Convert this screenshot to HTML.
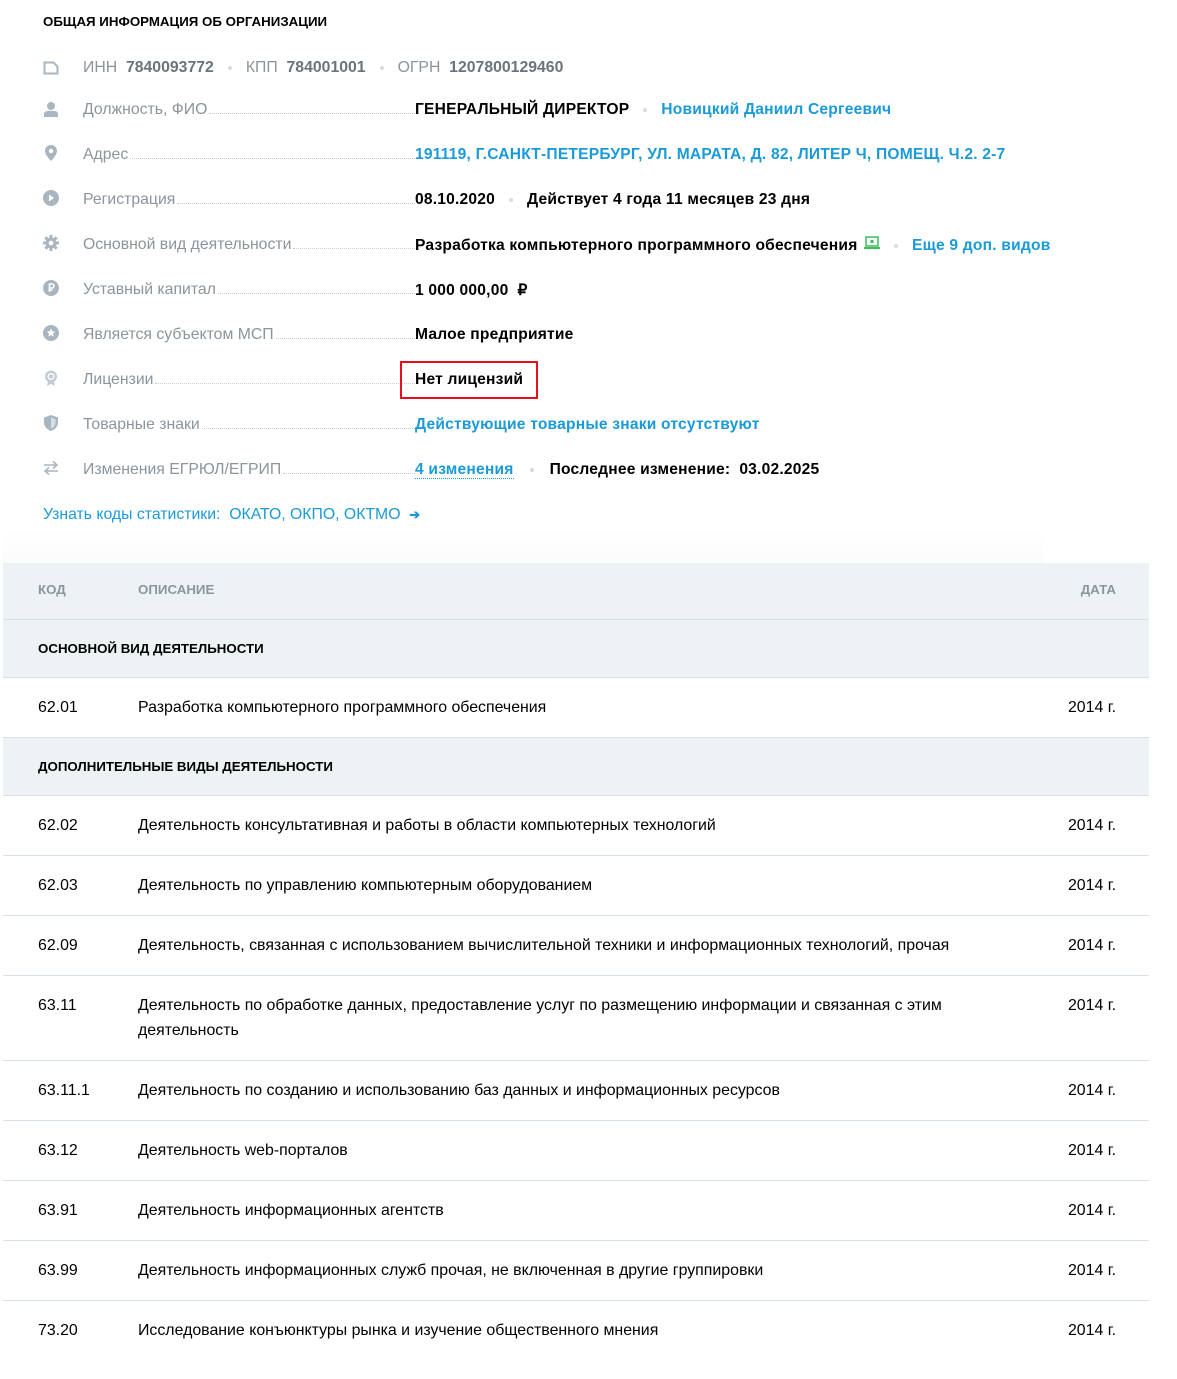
<!DOCTYPE html>
<html><head><meta charset="utf-8"><style>
*{margin:0;padding:0;box-sizing:border-box}
body{width:1177px;height:1379px;background:#fff;font-family:"Liberation Sans",sans-serif;color:#000;position:relative;overflow:hidden}
.a{position:absolute;white-space:nowrap}
.t{left:43px;top:14px;font-size:13.3px;font-weight:bold}
.lab{left:83px;font-size:15.8px;color:#8b959d;width:332px;display:flex;align-items:baseline}
.lab:after{content:"";flex:1;border-bottom:1px dotted #c5cbd0;margin-left:2px}
.v{left:415px;font-size:15.6px;font-weight:bold;letter-spacing:0.2px}
.b{color:#1a9bd7}
.dot{display:inline-block;width:4px;height:4px;border-radius:2px;background:#d5dde3;vertical-align:middle;margin:0 14px}
.ic{position:absolute;left:43px;width:16px;height:16px}
.tb{position:absolute;left:3px;width:1146px}
.r{position:relative;border-bottom:1px solid #d8e1e7;font-size:15.9px;height:60px}
.r span{position:absolute;top:21px}
.c1{left:35px}.c2{left:135px}.c3{right:33px}
.hd{background:#edf2f5}
</style></head><body>
<div class="a t">ОБЩАЯ ИНФОРМАЦИЯ ОБ ОРГАНИЗАЦИИ</div>

<svg class="ic" style="top:60px" viewBox="0 0 16 16"><path d="M1.5 2.5h9l4 4v7h-13z" fill="none" stroke="#a9b6c0" stroke-width="2"/></svg>
<div class="a" style="left:83px;top:59px;font-size:15.8px;color:#8b959d">ИНН&nbsp; <b style="color:#6a747c">7840093772</b><span class="dot"></span>КПП&nbsp; <b style="color:#6a747c">784001001</b><span class="dot"></span>ОГРН&nbsp; <b style="color:#6a747c">1207800129460</b></div>

<svg class="ic" style="top:101px" viewBox="0 0 16 16"><circle cx="8" cy="5" r="4" fill="#a9b6c0"/><path d="M1 16v-3q0-3 4-3h6q4 0 4 3v3z" fill="#a9b6c0"/></svg>
<div class="a lab" style="top:101px">Должность, ФИО</div>
<div class="a v" style="top:101px">ГЕНЕРАЛЬНЫЙ ДИРЕКТОР<span class="dot"></span><span class="b">Новицкий Даниил Сергеевич</span></div>

<svg class="ic" style="top:145px" viewBox="0 0 16 16"><path d="M8 0a6 6 0 0 1 6 6c0 4-6 10-6 10S2 10 2 6a6 6 0 0 1 6-6z" fill="#a9b6c0"/><circle cx="8" cy="6" r="2.2" fill="#fff"/></svg>
<div class="a lab" style="top:146px">Адрес</div>
<div class="a v b" style="top:146px">191119, Г.САНКТ-ПЕТЕРБУРГ, УЛ. МАРАТА, Д. 82, ЛИТЕР Ч, ПОМЕЩ. Ч.2. 2-7</div>

<svg class="ic" style="top:190px" viewBox="0 0 16 16"><circle cx="8" cy="8" r="8" fill="#a9b6c0"/><path d="M6 4.5l5 3.5-5 3.5z" fill="#fff"/></svg>
<div class="a lab" style="top:191px">Регистрация</div>
<div class="a v" style="top:191px">08.10.2020<span class="dot"></span>Действует 4 года 11 месяцев 23 дня</div>

<svg class="ic" style="top:235px" viewBox="0 0 16 16"><circle cx="8" cy="8" r="5.5" fill="#a9b6c0"/><g stroke="#a9b6c0" stroke-width="3"><path d="M8 0v16M0 8h16M2.3 2.3l11.4 11.4M13.7 2.3L2.3 13.7"/></g><circle cx="8" cy="8" r="2.3" fill="#fff"/></svg>
<div class="a lab" style="top:236px">Основной вид деятельности</div>
<div class="a v" style="top:236px">Разработка компьютерного программного обеспечения <svg width="16" height="14" viewBox="0 0 16 14" style="vertical-align:0px;margin-left:2px"><rect x="2" y="1" width="12" height="9" fill="none" stroke="#3cbf5c" stroke-width="1.5"/><rect x="0" y="11" width="16" height="2" fill="#3cbf5c"/><rect x="6.5" y="4" width="3" height="3" fill="#3cbf5c"/></svg><span class="dot"></span><span class="b">Еще 9 доп. видов</span></div>

<svg class="ic" style="top:280px" viewBox="0 0 16 16"><circle cx="8" cy="8" r="8" fill="#a9b6c0"/><path d="M6.5 12V4h2.5a2 2 0 0 1 0 4H5.5M5.5 10h4" fill="none" stroke="#fff" stroke-width="1.6"/></svg>
<div class="a lab" style="top:281px">Уставный капитал</div>
<div class="a v" style="top:281px">1 000 000,00&nbsp; ₽</div>

<svg class="ic" style="top:325px" viewBox="0 0 16 16"><circle cx="8" cy="8" r="8" fill="#a9b6c0"/><path d="M8 3.5l1.3 2.8 3 .3-2.3 2 .7 3L8 10l-2.7 1.6.7-3-2.3-2 3-.3z" fill="#fff"/></svg>
<div class="a lab" style="top:326px">Является субъектом МСП</div>
<div class="a v" style="top:326px">Малое предприятие</div>

<svg class="ic" style="top:370px" viewBox="0 0 16 16"><circle cx="8" cy="6.5" r="6" fill="#c4cdd4"/><circle cx="8" cy="6.5" r="3.5" fill="#fff"/><circle cx="8" cy="6.5" r="2.2" fill="#c4cdd4"/><path d="M5 11l-1 5 4-2 4 2-1-5z" fill="#c4cdd4"/></svg>
<div class="a lab" style="top:371px">Лицензии</div>
<div class="a" style="left:400px;top:361px;width:138px;height:38px;border:2px solid #e8101a"></div>
<div class="a v" style="top:371px">Нет лицензий</div>

<svg class="ic" style="top:415px" viewBox="0 0 16 16"><path d="M8 0l7 2.5v5c0 4-3 7-7 8.5C4 14.5 1 11.5 1 7.5v-5z" fill="#a9b6c0"/><path d="M8 2.5v11c2.5-1 4.5-3 4.5-6V4.2z" fill="#d7dee3"/></svg>
<div class="a lab" style="top:416px">Товарные знаки</div>
<div class="a v b" style="top:416px">Действующие товарные знаки отсутствуют</div>

<svg class="ic" style="top:460px" viewBox="0 0 16 16"><path d="M1 5h13M10 1.5L14 5l-4 3.5M15 11H2M6 7.5L2 11l4 3.5" fill="none" stroke="#a9b6c0" stroke-width="1.6"/></svg>
<div class="a lab" style="top:461px">Изменения ЕГРЮЛ/ЕГРИП</div>
<div class="a v" style="top:461px"><span class="b" style="border-bottom:1px dotted #1a9bd7">4 изменения</span><span class="dot" style="margin:0 16px"></span>Последнее изменение:&nbsp; 03.02.2025</div>

<div class="a b" style="left:43px;top:506px;font-size:15.8px">Узнать коды статистики:&nbsp; ОКАТО, ОКПО, ОКТМО&nbsp; <b style="font-size:13px">➔</b></div>
<div class="a" style="left:3px;top:530px;width:1040px;height:33px;background:linear-gradient(#fff,#fbfbfb)"></div>

<div class="tb" style="top:563px">
<div class="r hd" style="height:57px;font-size:13.3px;font-weight:bold;color:#8b959d"><span class="c1" style="top:19px">КОД</span><span class="c2" style="top:19px">ОПИСАНИЕ</span><span class="c3" style="top:19px">ДАТА</span></div>
<div class="r hd" style="height:58px;font-size:13.3px;font-weight:bold"><span class="c1" style="top:21px">ОСНОВНОЙ ВИД ДЕЯТЕЛЬНОСТИ</span></div>
<div class="r"><span class="c1">62.01</span><span class="c2">Разработка компьютерного программного обеспечения</span><span class="c3">2014 г.</span></div>
<div class="r hd" style="height:58px;font-size:13.3px;font-weight:bold"><span class="c1" style="top:21px">ДОПОЛНИТЕЛЬНЫЕ ВИДЫ ДЕЯТЕЛЬНОСТИ</span></div>
<div class="r"><span class="c1">62.02</span><span class="c2">Деятельность консультативная и работы в области компьютерных технологий</span><span class="c3">2014 г.</span></div>
<div class="r"><span class="c1">62.03</span><span class="c2">Деятельность по управлению компьютерным оборудованием</span><span class="c3">2014 г.</span></div>
<div class="r"><span class="c1">62.09</span><span class="c2">Деятельность, связанная с использованием вычислительной техники и информационных технологий, прочая</span><span class="c3">2014 г.</span></div>
<div class="r" style="height:85px"><span class="c1">63.11</span><span class="c2" style="line-height:25px;top:17px">Деятельность по обработке данных, предоставление услуг по размещению информации и связанная с этим<br>деятельность</span><span class="c3">2014 г.</span></div>
<div class="r"><span class="c1">63.11.1</span><span class="c2">Деятельность по созданию и использованию баз данных и информационных ресурсов</span><span class="c3">2014 г.</span></div>
<div class="r"><span class="c1">63.12</span><span class="c2">Деятельность web-порталов</span><span class="c3">2014 г.</span></div>
<div class="r"><span class="c1">63.91</span><span class="c2">Деятельность информационных агентств</span><span class="c3">2014 г.</span></div>
<div class="r"><span class="c1">63.99</span><span class="c2">Деятельность информационных служб прочая, не включенная в другие группировки</span><span class="c3">2014 г.</span></div>
<div class="r" style="border-bottom:none"><span class="c1">73.20</span><span class="c2">Исследование конъюнктуры рынка и изучение общественного мнения</span><span class="c3">2014 г.</span></div>
</div>
</body></html>
